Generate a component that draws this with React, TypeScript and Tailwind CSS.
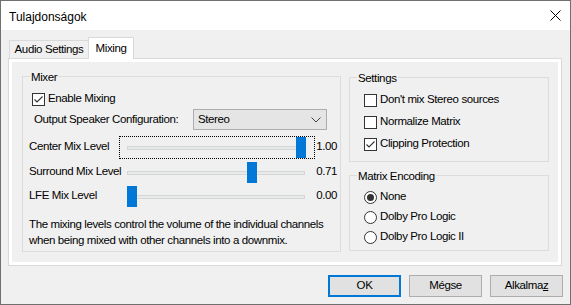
import React from 'react';

const Check = ({ checked, label, h = 'h-[22px]' }: { checked?: boolean; label: string; h?: string }) => (
    <div className={`flex items-center ${h}`}>
        <span className="w-[13px] h-[13px] border border-[#333333] bg-white flex items-center justify-center">
            {checked && (
                <svg width="11" height="11" viewBox="0 0 11 11">
                    <path d="M1.5 5.5 L4 8 L9.5 2.5" stroke="#333333" strokeWidth="1.1" fill="none" />
                </svg>
            )}
        </span>
        <span className="ml-[3px]">{label}</span>
    </div>
);

const Radio = ({ checked, label }: { checked?: boolean; label: string }) => (
    <div className="flex items-center h-[20px]">
        <span className="w-[13px] h-[13px] rounded-full border border-[#333333] bg-white flex items-center justify-center">
            {checked && <span className="w-[7px] h-[7px] rounded-full bg-[#333333]" />}
        </span>
        <span className="ml-[3px]">{label}</span>
    </div>
);

const Slider = ({ label, value, pct, focused }: { label: string; value: string; pct: number; focused?: boolean }) => (
    <div className="flex items-center h-[24px]">
        <span className="w-[90px]">{label}</span>
        <div className={`relative w-[196px] h-[23px] border border-dotted ${focused ? 'border-black' : 'border-transparent'}`}>
            <div className="absolute left-[7px] top-[9px] w-[178px] h-[4px] bg-[#e7eaea] border border-[#d6d6d6]" />
            <div className="absolute top-0 w-[10px] h-[21px] bg-[#0078d7]" style={{ left: 7 + Math.round(pct * 169) }} />
        </div>
        <span className="w-[22px] text-right">{value}</span>
    </div>
);

const Group = ({ title, className, children }: { title: string; className: string; children: React.ReactNode }) => (
    <div className={`relative border border-[#dcdcdc] ${className}`}>
        <span className="absolute -top-[8px] left-[7px] px-[1px] bg-[#f0f0f0] leading-[16px]">{title}</span>
        {children}
    </div>
);

export default function App() {
    return (
        <div className="w-[571px] h-[305px] border border-[#707070] bg-[#f0f0f0] text-[11.5px] text-black font-['Liberation_Sans',Arial,sans-serif] tracking-[-0.38px] whitespace-nowrap flex flex-col overflow-hidden">
            <div className="h-[29px] bg-white flex items-center justify-between pl-[8px] pr-[9px] shrink-0">
                <span className="text-[12px] pt-[2px] tracking-normal">Tulajdonságok</span>
                <svg width="11" height="11" viewBox="0 0 11 11">
                    <path d="M0.5 0.5 L10.5 10.5 M10.5 0.5 L0.5 10.5" stroke="#000" strokeWidth="1" />
                </svg>
            </div>

            <div className="pl-[7px] pt-[7px]">
                <div className="flex items-end h-[21px]">
                    <div className="h-[18px] w-[80px] border border-b-0 border-[#d9d9d9] bg-[#f0f0f0] flex items-center justify-center ml-[1px] pt-[1px]">
                        Audio Settings
                    </div>
                    <div className="h-[22px] w-[46px] -ml-[1px] border border-b-0 border-[#d9d9d9] bg-white flex items-center justify-center relative z-10 -mb-[1px]">
                        Mixing
                    </div>
                </div>

                <div className="w-[554px] h-[208px] border border-[#d9d9d9] bg-white p-[3px]">
                    <div className="w-full h-full bg-[#f0f0f0] flex pl-[10px] pt-[14px]">
                        <Group title="Mixer" className="w-[319px] h-[176px] pl-[6px] pt-[12px]">
                            <div className="flex flex-col">
                                <div className="pl-[3px]">
                                    <Check checked label="Enable Mixing" h="h-[20px]" />
                                </div>
                                <div className="flex items-center h-[21px] pl-[5px]">
                                    <span className="w-[159px]">Output Speaker Configuration:</span>
                                    <div className="w-[134px] h-[21px] border border-[#adadad] bg-[#e5e5e5] flex items-center justify-between pl-[4px] pr-[5px]">
                                        <span>Stereo</span>
                                        <svg width="10" height="6" viewBox="0 0 10 6">
                                            <path d="M0.5 0.5 L5 5 L9.5 0.5" stroke="#444" strokeWidth="1" fill="none" />
                                        </svg>
                                    </div>
                                </div>
                                <div className="mt-[5px]">
                                    <Slider label="Center Mix Level" value="1.00" pct={1} focused />
                                </div>
                                <div className="mt-[1px]">
                                    <Slider label="Surround Mix Level" value="0.71" pct={0.71} />
                                </div>
                                <Slider label="LFE Mix Level" value="0.00" pct={0} />
                                <p className="mt-[8px] leading-[16px]">
                                    The mixing levels control the volume of the individual channels
                                    <br />
                                    when being mixed with other channels into a downmix.
                                </p>
                            </div>
                        </Group>

                        <div className="ml-[8px] flex flex-col pt-[1px]">
                            <Group title="Settings" className="w-[200px] h-[85px] pl-[14px] pt-[11px]">
                                <Check label="Don't mix Stereo sources" />
                                <Check label="Normalize Matrix" />
                                <Check checked label="Clipping Protection" />
                            </Group>
                            <Group title="Matrix Encoding" className="mt-[13px] w-[200px] h-[76px] pl-[14px] pt-[11px]">
                                <Radio checked label="None" />
                                <Radio label="Dolby Pro Logic" />
                                <Radio label="Dolby Pro Logic II" />
                            </Group>
                        </div>
                    </div>
                </div>
            </div>

            <div className="flex justify-end gap-[8px] pr-[7px] mt-[9px]">
                <button className="w-[73px] h-[22px] border-2 border-[#0078d7] bg-[#e1e1e1]">OK</button>
                <button className="w-[73px] h-[22px] border border-[#adadad] bg-[#e1e1e1]">Mégse</button>
                <button className="w-[73px] h-[22px] border border-[#adadad] bg-[#e1e1e1]">
                    Alkalma<span className="underline">z</span>
                </button>
            </div>
        </div>
    );
}
